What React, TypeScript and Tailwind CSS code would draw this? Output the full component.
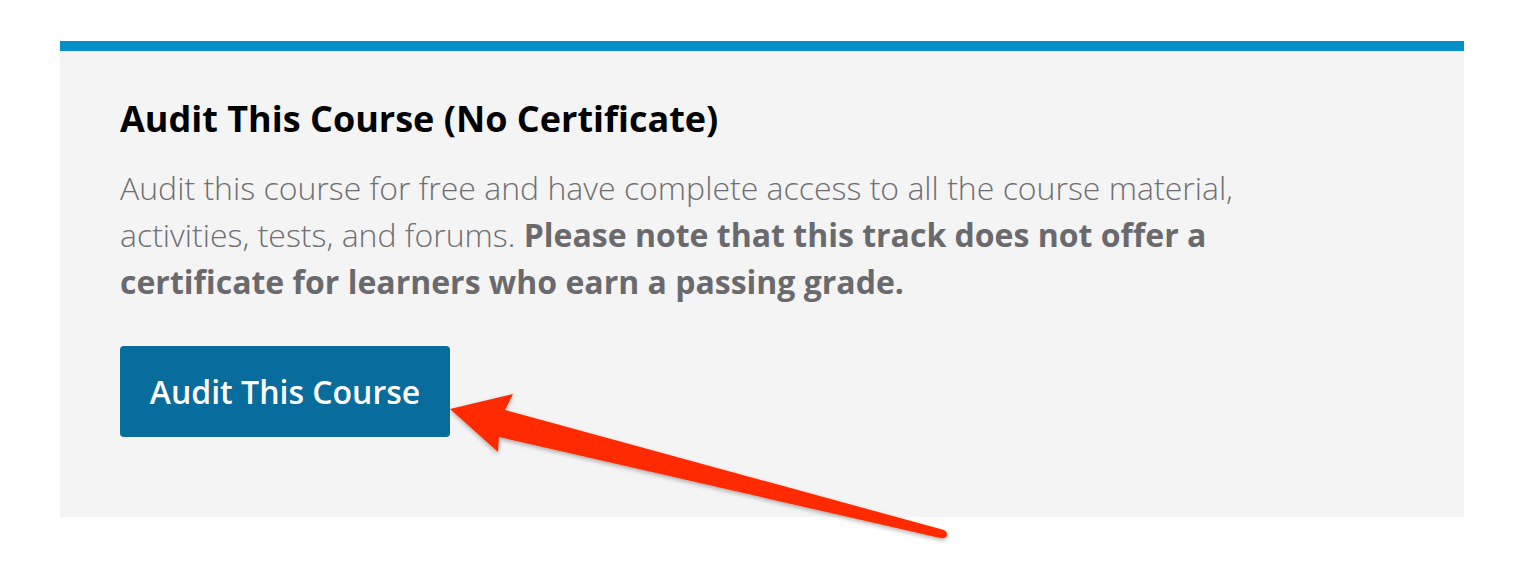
export default function App() {
  return (
    <div className="relative min-h-[574px] w-full bg-white pt-[41px] font-['Open_Sans',sans-serif]">
      <section className="ml-[60px] w-[1404px] border-t-[10px] border-[#0590c9] bg-[#f4f4f4] px-[60px] pt-[46px] pb-[80px]">
        <h2 className="text-[36px] leading-[44px] font-bold text-black">
          Audit This Course (No Certificate)
        </h2>
        <p className="mt-[23px] max-w-[1150px] text-[32px] leading-[47px] font-light text-[#6f6f72]">
          Audit this course for free and have complete access to all the course material,
          activities, tests, and forums.{" "}
          <strong className="font-bold text-[#6a6a6e]">
            Please note that this track does not offer a certificate for learners who earn a
            passing grade.
          </strong>
        </p>
        <button className="mt-[41px] h-[91px] w-[330px] rounded-[4px] bg-[#086c9c] text-[32px] font-semibold text-white">
          Audit This Course
        </button>
      </section>
      <svg
        className="pointer-events-none absolute top-0 left-0"
        width="1526"
        height="574"
        viewBox="0 0 1526 574"
      >
        <defs>
          <filter id="sh" x="-10%" y="-10%" width="120%" height="130%">
            <feDropShadow dx="0" dy="2" stdDeviation="2" floodColor="#000" floodOpacity="0.3" />
          </filter>
        </defs>
        <path
          d="M450 409 L513 394 L505 410 L944 530 Q949 533 946 537 Q944 539 940 538 L499 437 L498 452 Z"
          fill="#ff2a00"
          filter="url(#sh)"
        />
      </svg>
    </div>
  );
}
